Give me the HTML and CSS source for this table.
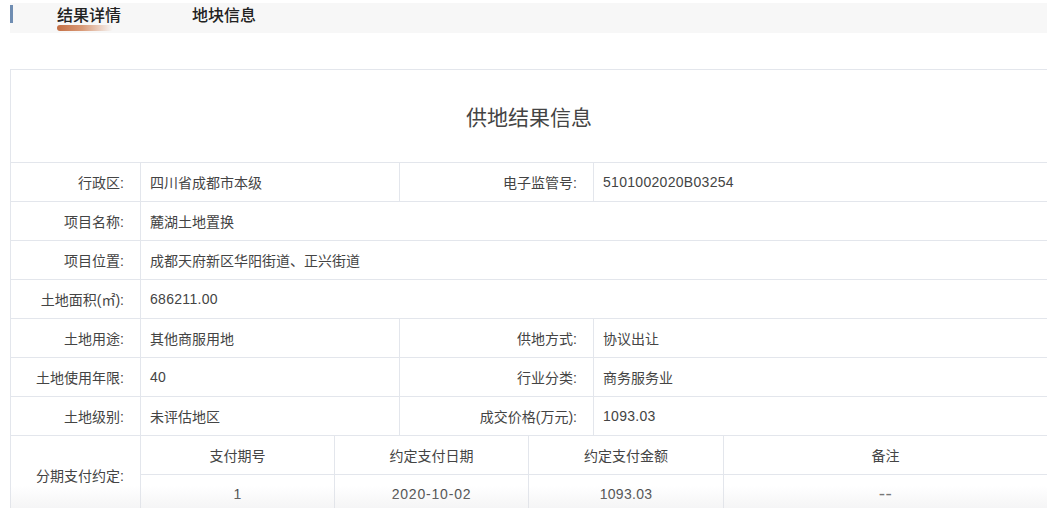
FILE: index.html
```html
<!DOCTYPE html>
<html lang="zh-CN">
<head>
<meta charset="utf-8">
<link rel="stylesheet" href="styles.css">
</head>
<body>
<div class="page">
  <div class="tabbar">
    <span class="accent"></span>
    <div class="tab active">结果详情<span class="underline"></span></div>
    <div class="tab">地块信息</div>
  </div>
  <div class="clip">
  <table class="info">
    <colgroup>
      <col class="c1"><col class="c2"><col class="c3"><col class="c4"><col class="c5"><col class="c6"><col class="c7">
    </colgroup>
    <tr class="title-row"><td colspan="7" class="title">供地结果信息</td></tr>
    <tr>
      <td class="lbl">行政区:</td><td colspan="2" class="val">四川省成都市本级</td>
      <td colspan="2" class="lbl">电子监管号:</td><td colspan="2" class="val num">5101002020B03254</td>
    </tr>
    <tr><td class="lbl">项目名称:</td><td colspan="6" class="val">麓湖土地置换</td></tr>
    <tr><td class="lbl">项目位置:</td><td colspan="6" class="val">成都天府新区华阳街道、正兴街道</td></tr>
    <tr><td class="lbl">土地面积(㎡):</td><td colspan="6" class="val num">686211.00</td></tr>
    <tr>
      <td class="lbl">土地用途:</td><td colspan="2" class="val">其他商服用地</td>
      <td colspan="2" class="lbl">供地方式:</td><td colspan="2" class="val">协议出让</td>
    </tr>
    <tr>
      <td class="lbl">土地使用年限:</td><td colspan="2" class="val num">40</td>
      <td colspan="2" class="lbl">行业分类:</td><td colspan="2" class="val">商务服务业</td>
    </tr>
    <tr>
      <td class="lbl">土地级别:</td><td colspan="2" class="val">未评估地区</td>
      <td colspan="2" class="lbl">成交价格(万元):</td><td colspan="2" class="val num">1093.03</td>
    </tr>
    <tr>
      <td rowspan="2" class="lbl">分期支付约定:</td>
      <td class="ctr">支付期号</td><td colspan="2" class="ctr">约定支付日期</td><td colspan="2" class="ctr">约定支付金额</td><td class="ctr">备注</td>
    </tr>
    <tr class="last">
      <td class="ctr num">1</td><td colspan="2" class="ctr num date">2020-10-02</td><td colspan="2" class="ctr num">1093.03</td><td class="ctr dash">--</td>
    </tr>
  </table>
  </div>
</div>
</body>
</html>
```

FILE: styles.css
```css
html, body {
  margin: 0;
  padding: 0;
  background: #ffffff;
}
body {
  font-family: "Liberation Sans", "Noto Sans CJK SC", sans-serif;
  color: #444;
  height: 517px;
  overflow: hidden;
}
.page {
  padding: 3px 7px 0 10px;
}
.tabbar {
  position: relative;
  display: flex;
  align-items: flex-start;
  height: 30px;
  background: #f7f7f7;
}
.accent {
  position: absolute;
  left: 0;
  top: 2px;
  width: 3px;
  height: 18px;
  background: #6f8db2;
}
.tab {
  position: relative;
  font-family: "Noto Sans CJK SC", sans-serif;
  font-size: 16px;
  font-weight: 500;
  color: #222;
  line-height: 22px;
}
.tab.active {
  margin-left: 47px;
}
.tab + .tab {
  margin-left: 71px;
}
.underline {
  position: absolute;
  left: 0;
  top: 22px;
  width: 56px;
  height: 6px;
  border-radius: 3px;
  background: linear-gradient(90deg, #c46f44 0%, #d99a78 45%, rgba(240, 220, 210, 0) 100%);
}
.clip {
  margin-top: 36px;
  height: 439px;
  overflow: hidden;
  position: relative;
}
.clip::after {
  content: "";
  position: absolute;
  left: 0;
  right: 0;
  bottom: 0;
  height: 22px;
  background: linear-gradient(180deg, rgba(255,255,255,0) 0%, rgba(225,225,228,0.35) 100%);
  pointer-events: none;
}
.info {
  width: 1037px;
  table-layout: fixed;
  border-collapse: collapse;
  border: 1px solid #e3e6ec;
  font-size: 14px;
}
.c1 { width: 130px; }
.c2 { width: 194px; }
.c3 { width: 65px; }
.c4 { width: 129px; }
.c5 { width: 65px; }
.c6 { width: 130px; }
.c7 { width: 324px; }
.info td {
  border: 1px solid #e3e6ec;
  height: 38px;
  padding: 0;
  font-family: "Liberation Sans", "Noto Sans CJK SC", sans-serif;
  color: #444;
}
.info .title-row td {
  height: 92px;
}
.title {
  text-align: center;
  font-family: "Noto Sans CJK SC", sans-serif;
  font-size: 21px;
  color: #444;
}
.lbl {
  text-align: right;
  padding-right: 16px !important;
  color: #555;
}
.val {
  text-align: left;
  padding-left: 9px !important;
}
.ctr {
  text-align: center;
}
.num {
  letter-spacing: 0.3px;
}
.date {
  letter-spacing: 0.8px;
}
.info td.dash {
  font-size: 19px;
  letter-spacing: 0.5px;
  color: #666;
}
```
